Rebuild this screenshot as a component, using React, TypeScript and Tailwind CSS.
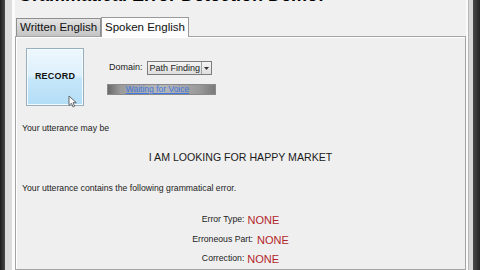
import React from "react";

export default function App() {
  return (
    <div
      className="w-[480px] h-[270px] overflow-hidden flex bg-[#f0f0f0] text-black"
      style={{ fontFamily: '"Liberation Sans", Arial, sans-serif' }}
    >
      {/* left window edge */}
      <div className="w-[5px] h-full bg-gradient-to-r from-[#1e1e1e] to-[#4a4a4a]" />
      <div className="w-[7px] h-full bg-[#dcdcdc]" />
      <div className="w-[3px] h-full bg-[#fbfbfb]" />

      {/* main column */}
      <div className="w-[451px] h-full flex flex-col">
        {/* title (cut at top) */}
        <div className="h-[17px] overflow-hidden pl-[3px]">
          <div className="-mt-[14px] text-[18px] leading-[18px] font-bold whitespace-nowrap">
            Grammatical Error Detection Demo:
          </div>
        </div>

        {/* tabs */}
        <div className="h-[19px] flex items-end pl-[1px] relative z-10">
          <div className="w-[85px] h-[18px] border border-b-0 border-[#8e8e8e] bg-gradient-to-b from-[#e4e4e4] to-[#c4c4c4] text-[11.5px] leading-[17px] pl-[3px] whitespace-nowrap text-[#111]">
            Written English
          </div>
          <div className="w-[88px] h-[20px] -mb-[1px] border border-b-0 border-[#9a9a9a] bg-[#fcfcfc] text-[11.5px] leading-[19px] pl-[3px] whitespace-nowrap text-[#111]">
            Spoken English
          </div>
        </div>

        {/* panel */}
        <div className="flex-1 border border-[#a3a3a3] bg-[#efefef] shadow-[inset_1px_1px_0_#ffffff] pt-[11px] flex flex-col">
          <div className="flex pl-[10px]">
            <div className="relative w-[58px] h-[58px] border border-[#98aebd] bg-[linear-gradient(to_bottom,#eef7fd_0%,#dcf0fc_48%,#c6e7fa_52%,#b3ddf6_100%)] flex items-center justify-center shadow-[inset_0_0_0_1px_#f4fbff]">
              <span className="text-[9px] font-bold tracking-[0.2px] text-[#111]">RECORD</span>
              <svg
                className="absolute left-[41px] top-[46px]"
                width="10"
                height="13"
                viewBox="0 0 10 13"
              >
                <path
                  d="M1 1 L1 10.5 L3.4 8.3 L5.1 12 L6.6 11.3 L5 7.7 L8.3 7.7 Z"
                  fill="#ffffff"
                  stroke="#555"
                  strokeWidth="0.9"
                  strokeLinejoin="round"
                />
              </svg>
            </div>

            <div className="ml-[23px] mt-[13px] flex flex-col">
              <div className="flex items-center h-[14px] pl-[2px]">
                <span className="text-[9px] text-[#222]">Domain:</span>
                <div className="ml-[4px] w-[65px] h-[14px] border border-[#7c7c7c] bg-gradient-to-b from-[#f4f4f4] to-[#dedede] flex">
                  <span className="flex-1 text-[9px] leading-[12px] pl-[2px] text-[#222] whitespace-nowrap">
                    Path Finding
                  </span>
                  <div className="w-[10px] h-full border-l border-[#a0a0a0] flex items-center justify-center">
                    <svg width="5" height="3" viewBox="0 0 5 3">
                      <path d="M0 0 L5 0 L2.5 3 Z" fill="#333" />
                    </svg>
                  </div>
                </div>
              </div>
              <div className="mt-[9px] w-[109px] h-[11px] border border-[#8a8a8a] bg-[linear-gradient(to_right,#6a6a6a_0%,#9c9c9c_12%,#b8b8b8_50%,#9a9a9a_85%,#7a7a7a_100%)] flex items-center justify-center">
                <span className="text-[8.5px] leading-[9px] text-[#3f78e0] underline whitespace-nowrap -ml-[8px]">
                  Waiting for Voice
                </span>
              </div>
            </div>
          </div>

          <div className="mt-[16px] pl-[6px] text-[8.7px] leading-[12px] text-[#222]">
            Your utterance may be
          </div>
          <div className="mt-[16px] text-center text-[10.6px] leading-[14px] text-[#1a1a1a]">
            I AM LOOKING FOR HAPPY MARKET
          </div>
          <div className="mt-[18px] pl-[6px] text-[8.7px] leading-[12px] text-[#222]">
            Your utterance contains the following grammatical error.
          </div>

          <div className="mt-[19px] h-[14px] flex items-center justify-center">
            <span className="text-[8.7px] text-[#222]">Error Type:</span>
            <span className="ml-[3px] text-[11px] text-[#b3262a]">NONE</span>
          </div>
          <div className="mt-[6px] h-[14px] flex items-center justify-center">
            <span className="text-[8.7px] text-[#222]">Erroneous Part:</span>
            <span className="ml-[4px] text-[11px] text-[#b3262a]">NONE</span>
          </div>
          <div className="mt-[5px] h-[14px] flex items-center justify-center">
            <span className="text-[8.7px] text-[#222]">Correction:</span>
            <span className="ml-[3px] text-[11px] text-[#b3262a]">NONE</span>
          </div>
        </div>
      </div>

      {/* right window edge */}
      <div className="w-[2px] h-full bg-[#fafafa]" />
      <div className="w-[5px] h-full bg-[#d8d8d8] border-l border-[#b8b8b8]" />
      <div className="w-[7px] h-full bg-gradient-to-r from-[#4a4a4a] to-[#262626]" />
    </div>
  );
}
